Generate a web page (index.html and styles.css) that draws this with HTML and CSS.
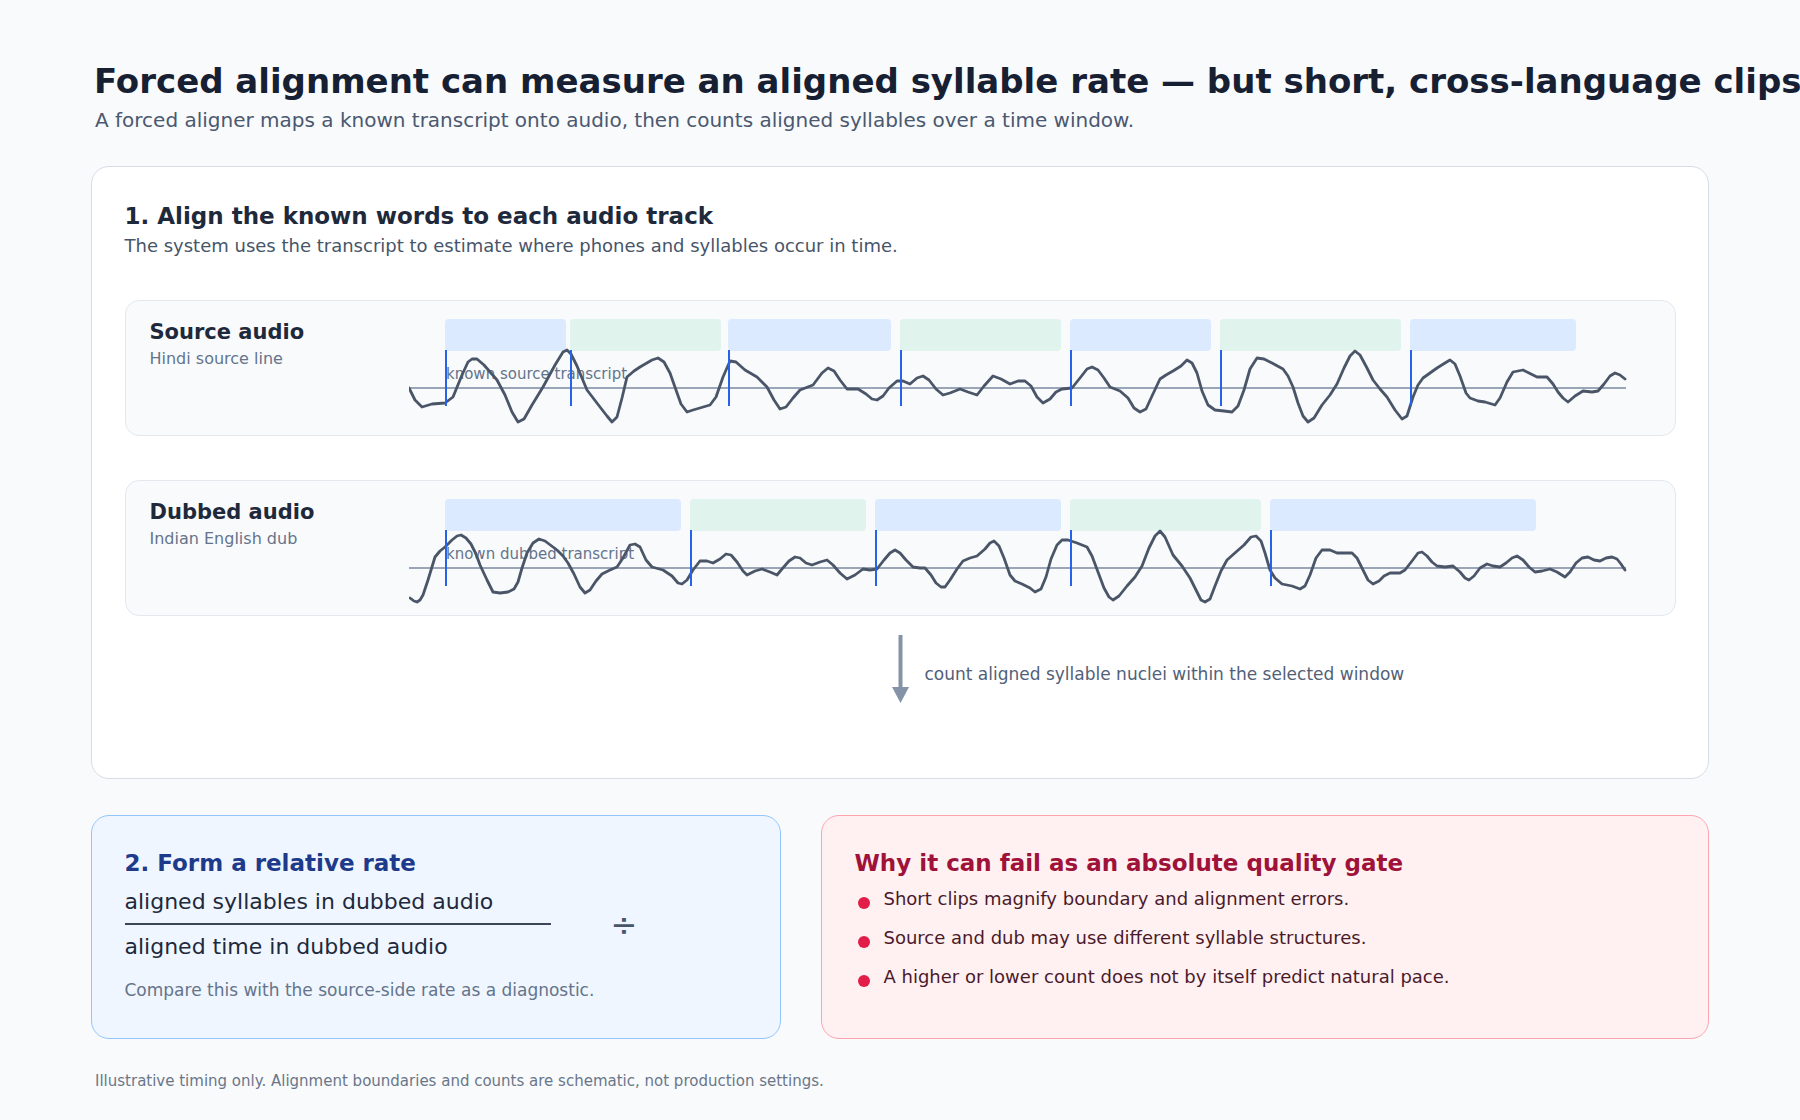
FILE: index.html
```html
<!DOCTYPE html>
<html lang="en">
<head>
<meta charset="utf-8">
<title>Forced alignment and aligned syllable rate</title>
<link rel="stylesheet" href="styles.css">
</head>
<body>
<main class="page">
  <h1 class="title">Forced alignment can measure an aligned syllable rate — but short, cross-language clips</h1>
  <p class="lede">A forced aligner maps a known transcript onto audio, then counts aligned syllables over a time window.</p>

  <section class="align-card">
    <h2 class="card-title">1. Align the known words to each audio track</h2>
    <p class="card-sub">The system uses the transcript to estimate where phones and syllables occur in time.</p>

    <div class="track">
      <div class="track-label">
        <div class="track-name">Source audio</div>
        <div class="track-lang">Hindi source line</div>
      </div>
      <svg class="wave-svg" viewBox="409 301 1265 134" width="1265" height="134">
        <rect class="seg-blue" x="445" y="319" width="121" height="32" rx="4"/>
        <rect class="seg-green" x="570" y="319" width="151" height="32" rx="4"/>
        <rect class="seg-blue" x="728" y="319" width="163" height="32" rx="4"/>
        <rect class="seg-green" x="900" y="319" width="161" height="32" rx="4"/>
        <rect class="seg-blue" x="1070" y="319" width="141" height="32" rx="4"/>
        <rect class="seg-green" x="1220" y="319" width="181" height="32" rx="4"/>
        <rect class="seg-blue" x="1410" y="319" width="166" height="32" rx="4"/>
        <line class="axis" x1="409" y1="388" x2="1626" y2="388"/>
        <text class="tx-label" x="446" y="379">known source transcript</text>
        <polyline class="wave" points="409,388 415,400 422,407 432,404 445,403 453,397 462,375 468,362 472,359 477,359 484,365 497,380 505,395 512,412 518,422 524,419 532,405 543,387 555,365 563,352 567,350 571,354 577,366 587,390 600,407 607,416 612,422 617,417 622,398 627,377 634,371 640,367 652,360 658,358 664,362 670,373 676,390 681,404 687,412 693,410 710,405 716,397 723,377 730,361 736,362 745,370 757,377 767,387 774,400 780,409 786,407 793,398 800,390 813,385 822,373 828,368 834,371 840,380 847,389 858,389 866,394 872,399 877,400 883,396 889,388 897,381 903,381 910,384 917,378 923,376 929,380 936,389 943,395 950,393 960,389 968,392 977,395 984,386 993,376 1001,379 1010,384 1018,381 1025,381 1031,386 1037,397 1043,403 1050,399 1056,392 1062,389 1072,388 1080,378 1087,369 1092,367 1098,370 1104,378 1110,387 1120,391 1128,398 1134,408 1140,412 1146,409 1152,396 1160,379 1166,375 1173,371 1181,366 1187,360 1192,363 1197,373 1202,391 1208,405 1215,410 1224,411 1232,412 1238,406 1244,390 1250,369 1257,358 1264,359 1272,363 1283,369 1288,376 1293,387 1298,403 1303,416 1308,422 1314,418 1322,405 1330,395 1337,384 1344,368 1350,356 1355,351 1360,355 1367,368 1373,380 1380,389 1387,397 1395,410 1402,419 1407,416 1413,397 1418,385 1423,378 1437,368 1445,363 1450,360 1455,364 1460,376 1466,393 1470,398 1478,401 1485,402 1495,405 1500,398 1507,382 1513,372 1523,370 1531,374 1537,377 1547,377 1553,384 1558,392 1563,398 1568,402 1575,396 1583,391 1592,392 1598,391 1604,384 1610,376 1615,373 1620,375 1625,379"/>
        <line class="bound" x1="446" y1="350" x2="446" y2="406"/>
        <line class="bound" x1="571" y1="350" x2="571" y2="406"/>
        <line class="bound" x1="729" y1="350" x2="729" y2="406"/>
        <line class="bound" x1="901" y1="350" x2="901" y2="406"/>
        <line class="bound" x1="1071" y1="350" x2="1071" y2="406"/>
        <line class="bound" x1="1221" y1="350" x2="1221" y2="406"/>
        <line class="bound" x1="1411" y1="350" x2="1411" y2="406"/>
      </svg>
    </div>

    <div class="track">
      <div class="track-label">
        <div class="track-name">Dubbed audio</div>
        <div class="track-lang">Indian English dub</div>
      </div>
      <svg class="wave-svg" viewBox="409 481 1265 134" width="1265" height="134">
        <rect class="seg-blue" x="445" y="499" width="236" height="32" rx="4"/>
        <rect class="seg-green" x="690" y="499" width="176" height="32" rx="4"/>
        <rect class="seg-blue" x="875" y="499" width="186" height="32" rx="4"/>
        <rect class="seg-green" x="1070" y="499" width="191" height="32" rx="4"/>
        <rect class="seg-blue" x="1270" y="499" width="266" height="32" rx="4"/>
        <line class="axis" x1="409" y1="568" x2="1626" y2="568"/>
        <text class="tx-label" x="446" y="559">known dubbed transcript</text>
        <polyline class="wave" points="410,598 414,601 417,602 420,600 423,595 428,580 435,557 440,551 445,547 452,540 457,536 461,535 466,538 471,544 476,554 480,565 487,580 493,592 500,593 508,592 514,589 518,582 522,568 527,553 533,543 539,539 545,541 557,550 563,556 568,563 574,574 580,587 585,593 590,590 596,581 602,574 610,570 617,567 623,558 630,545 635,544 640,547 646,560 652,567 663,570 672,576 678,583 682,584 687,580 693,570 700,561 707,561 713,563 720,559 726,554 731,555 737,562 743,571 747,575 755,571 762,569 770,572 777,575 782,569 789,561 795,557 800,558 806,563 812,565 820,562 827,560 833,565 840,573 847,579 855,575 863,569 870,570 877,569 884,560 890,553 895,550 900,553 906,560 913,567 920,568 925,568 931,575 936,583 941,587 945,587 950,580 957,569 963,561 970,558 977,556 985,549 990,543 994,541 999,546 1004,558 1010,575 1015,581 1022,584 1030,588 1035,592 1041,589 1046,577 1051,559 1057,545 1062,540 1068,540 1077,543 1087,547 1092,556 1098,572 1104,588 1109,597 1113,600 1119,596 1127,586 1135,577 1142,566 1149,548 1155,536 1160,531 1165,537 1173,555 1182,566 1190,578 1196,590 1201,600 1205,602 1210,599 1215,586 1221,571 1227,560 1236,552 1244,545 1251,537 1256,536 1261,541 1265,553 1270,570 1275,578 1282,584 1292,586 1300,589 1305,586 1310,575 1316,558 1322,550 1330,550 1337,553 1345,553 1352,553 1357,558 1362,568 1368,580 1373,584 1379,581 1384,576 1390,573 1400,573 1405,570 1412,561 1418,553 1422,552 1427,556 1432,562 1437,566 1445,567 1453,566 1460,572 1465,578 1469,580 1474,576 1480,568 1487,564 1493,566 1500,567 1506,563 1512,558 1517,556 1523,560 1529,567 1535,572 1542,571 1550,569 1557,572 1565,577 1570,572 1576,563 1582,558 1588,557 1594,560 1600,561 1606,558 1612,557 1617,559 1621,564 1625,570"/>
        <line class="bound" x1="446" y1="530" x2="446" y2="586"/>
        <line class="bound" x1="691" y1="530" x2="691" y2="586"/>
        <line class="bound" x1="876" y1="530" x2="876" y2="586"/>
        <line class="bound" x1="1071" y1="530" x2="1071" y2="586"/>
        <line class="bound" x1="1271" y1="530" x2="1271" y2="586"/>
      </svg>
    </div>

    <div class="count-row">
      <svg class="arrow" viewBox="0 0 17 70" width="17" height="70" aria-hidden="true">
        <rect class="arrow-fill" x="6.5" y="0" width="4" height="54"/>
        <polygon class="arrow-fill" points="0,52 17,52 8.5,68"/>
      </svg>
      <span class="count-text">count aligned syllable nuclei within the selected window</span>
    </div>
  </section>

  <div class="bottom">
    <section class="rate-card">
      <h2 class="rate-title">2. Form a relative rate</h2>
      <div class="fraction-row">
        <div class="fraction">
          <div class="num">aligned syllables in dubbed audio</div>
          <div class="den">aligned time in dubbed audio</div>
        </div>
        <div class="divide">÷</div>
      </div>
      <p class="note">Compare this with the source-side rate as a diagnostic.</p>
    </section>

    <section class="risk-card">
      <h2 class="risk-title">Why it can fail as an absolute quality gate</h2>
      <ul class="risk-list">
        <li><span class="dot"></span><span>Short clips magnify boundary and alignment errors.</span></li>
        <li><span class="dot"></span><span>Source and dub may use different syllable structures.</span></li>
        <li><span class="dot"></span><span>A higher or lower count does not by itself predict natural pace.</span></li>
      </ul>
    </section>
  </div>

  <p class="footnote">Illustrative timing only. Alignment boundaries and counts are schematic, not production settings.</p>
</main>
</body>
</html>
```

FILE: styles.css
```css
html, body {
  margin: 0;
  padding: 0;
}

body {
  width: 1800px;
  height: 1120px;
  overflow: hidden;
  background: #f8fafc;
  font-family: "DejaVu Sans", "Noto Sans", sans-serif;
}

.page {
  padding: 61px 91px 0 91px;
}

.title {
  margin: 0;
  padding-left: 3px;
  font-size: 34px;
  line-height: 40px;
  font-weight: 700;
  color: #172033;
  white-space: nowrap;
}

.lede {
  margin: 6px 0 0;
  padding-left: 4px;
  font-size: 20px;
  line-height: 26px;
  color: #4b5870;
}

.align-card {
  margin-top: 33px;
  background: #ffffff;
  border: 1.5px solid #d6dde7;
  border-radius: 18px;
  padding: 33.5px 32.5px 73.5px 32.5px;
}

.card-title {
  margin: 0;
  font-size: 23px;
  line-height: 30px;
  font-weight: 700;
  color: #1e293b;
}

.card-sub {
  margin: 3px 0 0;
  font-size: 18px;
  line-height: 24px;
  color: #475569;
}

.track {
  display: flex;
  height: 136px;
  box-sizing: border-box;
  border: 1px solid #e3e8ef;
  border-radius: 14px;
  background: #f8fafc;
  margin-top: 42.2px;
}

.track + .track {
  margin-top: 44px;
}

.track-label {
  flex: none;
  width: 283px;
  box-sizing: border-box;
  padding: 18.2px 0 0 24px;
}

.track-name {
  font-size: 21px;
  line-height: 26px;
  font-weight: 700;
  color: #1e293b;
}

.track-lang {
  margin-top: 2.8px;
  font-size: 16px;
  line-height: 22px;
  color: #64748b;
}

.wave-svg {
  display: block;
  flex: none;
  width: 1265px;
  height: 134px;
}

.seg-blue {
  fill: #dbeafe;
}

.seg-green {
  fill: #e0f3ec;
}

.axis {
  stroke: #9aa6b8;
  stroke-width: 2;
}

.tx-label {
  font-family: "DejaVu Sans", "Noto Sans", sans-serif;
  font-size: 15px;
  fill: #64748b;
}

.wave {
  fill: none;
  stroke: #4a5568;
  stroke-width: 2.8;
  stroke-linejoin: round;
  stroke-linecap: round;
}

.bound {
  stroke: #2563eb;
  stroke-width: 2;
}

.count-row {
  display: flex;
  align-items: flex-start;
  margin-top: 19px;
  padding-left: 767.5px;
}

.arrow {
  display: block;
  flex: none;
}

.arrow-fill {
  fill: #8493a8;
}

.count-text {
  margin: 28.2px 0 0 15.5px;
  font-size: 17px;
  line-height: 22px;
  color: #526078;
  white-space: nowrap;
}

.bottom {
  display: flex;
  gap: 40px;
  margin-top: 36px;
}

.rate-card,
.risk-card {
  height: 224px;
  box-sizing: border-box;
  border-radius: 18px;
  padding: 31.5px 32.5px 0;
}

.rate-card {
  flex: none;
  width: 690px;
  background: #eff6ff;
  border: 1.5px solid #93c5fd;
}

.risk-card {
  flex: 1;
  background: #fff1f2;
  border: 1.5px solid #fda4af;
}

.rate-title,
.risk-title {
  margin: 0;
  font-size: 23px;
  line-height: 30px;
  font-weight: 700;
}

.rate-title {
  color: #1e3a8a;
}

.risk-title {
  color: #9f1239;
}

.fraction-row {
  display: flex;
  align-items: center;
  margin-top: 10.4px;
}

.fraction {
  flex: none;
  width: 426px;
}

.num,
.den {
  font-size: 22px;
  line-height: 28px;
  color: #1e293b;
}

.num {
  padding-bottom: 6.6px;
  border-bottom: 2px solid #3b4657;
}

.den {
  margin-top: 8.4px;
}

.divide {
  margin-left: 60px;
  font-size: 32px;
  line-height: 32px;
  color: #475569;
}

.note {
  margin: 17.5px 0 0;
  font-size: 17px;
  line-height: 22px;
  color: #64748b;
}

.risk-list {
  list-style: none;
  margin: 9.8px 0 0;
  padding: 0;
  display: flex;
  flex-direction: column;
  gap: 15px;
}

.risk-list li {
  display: flex;
  align-items: flex-start;
  font-size: 18px;
  line-height: 24px;
  color: #4a1a2a;
}

.dot {
  flex: none;
  width: 12px;
  height: 12px;
  border-radius: 50%;
  background: #e11d48;
  margin: 9.2px 14px 0 3px;
}

.footnote {
  margin: 31.8px 0 0;
  padding-left: 4px;
  font-size: 15px;
  line-height: 20px;
  color: #6b7689;
}
```
